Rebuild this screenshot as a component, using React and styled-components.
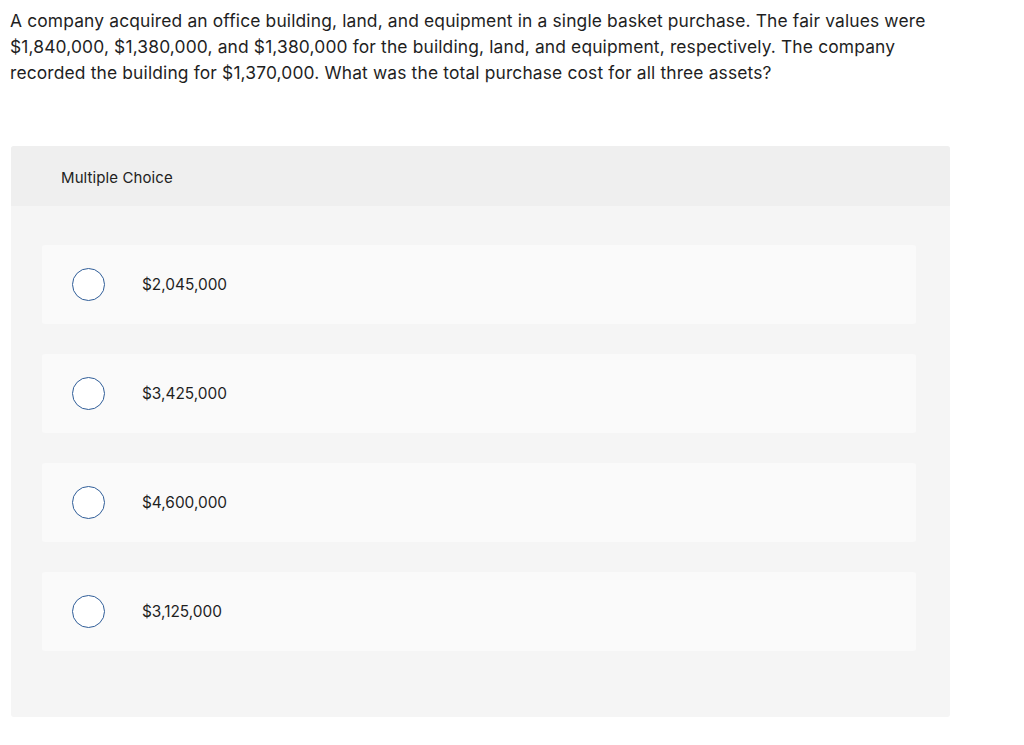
import React from "react";
import styled, { createGlobalStyle } from "styled-components";

const GlobalStyle = createGlobalStyle`
  body {
    margin: 0;
    background: #ffffff;
    font-family: Inter, "Noto Sans", sans-serif;
    color: #1f1f1f;
  }
`;

const Page = styled.div`
  width: 1024px;
  height: 745px;
  overflow: hidden;
`;

const Question = styled.p`
  margin: 0;
  padding: 8px 10px 0 10px;
  font-size: 17.4px;
  letter-spacing: 0.15px;
  line-height: 26px;
  white-space: nowrap;
`;

const Panel = styled.section`
  margin: 60px 0 0 11px;
  width: 939px;
  background: #f5f5f5;
  border-radius: 3px;
  padding-bottom: 66px;
`;

const PanelHeader = styled.div`
  height: 60px;
  box-sizing: border-box;
  padding: 3px 0 0 50px;
  display: flex;
  align-items: center;
  background: #efefef;
  border-radius: 3px 3px 0 0;
  font-size: 15px;
  letter-spacing: 0.1px;
  color: #222;
`;

const Options = styled.div`
  display: flex;
  flex-direction: column;
  gap: 30px;
  padding: 39px 34px 0 31px;
`;

const Option = styled.label`
  height: 79px;
  display: flex;
  align-items: center;
  padding-left: 30px;
  background: #fafafa;
  border-radius: 3px;
  cursor: pointer;
`;

const Radio = styled.span`
  width: 33px;
  height: 33px;
  box-sizing: border-box;
  border-radius: 50%;
  border: 1.5px solid #2f5d98;
  background: #ffffff;
  flex-shrink: 0;
`;

const OptionText = styled.span`
  margin-left: 37px;
  font-size: 15.4px;
  color: #1f1f1f;
`;

const choices = ["$2,045,000", "$3,425,000", "$4,600,000", "$3,125,000"];

export default function App() {
  return (
    <Page>
      <GlobalStyle />
      <Question>
        A company acquired an office building, land, and equipment in a single basket purchase. The fair values were
        <br />
        $1,840,000, $1,380,000, and $1,380,000 for the building, land, and equipment, respectively. The company
        <br />
        recorded the building for $1,370,000. What was the total purchase cost for all three assets?
      </Question>
      <Panel>
        <PanelHeader>Multiple Choice</PanelHeader>
        <Options>
          {choices.map((c) => (
            <Option key={c}>
              <Radio />
              <OptionText>{c}</OptionText>
            </Option>
          ))}
        </Options>
      </Panel>
    </Page>
  );
}
